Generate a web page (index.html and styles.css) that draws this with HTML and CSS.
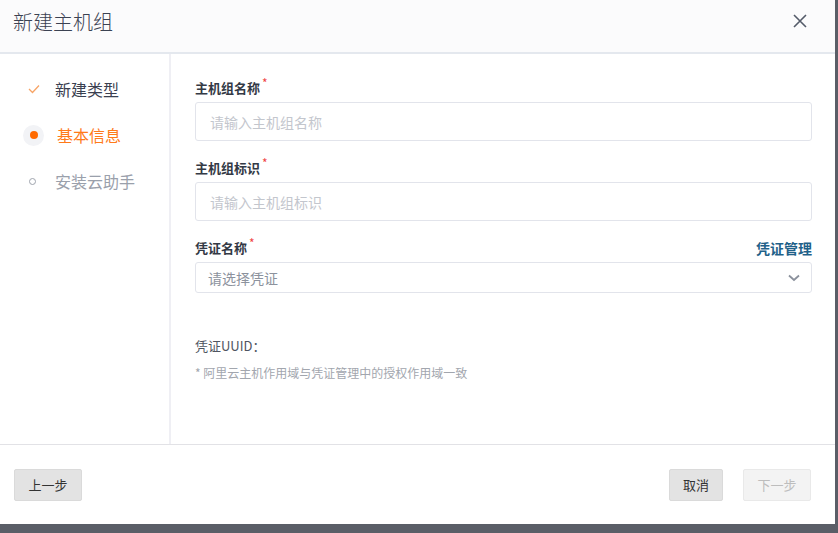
FILE: index.html
```html
<!DOCTYPE html>
<html lang="zh-CN">
<head>
  <meta charset="UTF-8" />
  <meta name="viewport" content="width=device-width, initial-scale=1.0"/>
  <title>新建主机组</title>
  <link rel="stylesheet" href="styles.css">
</head>
<body>

  <div class="dialog">
    <header class="dialog-header">
      <h1>新建主机组</h1>
      <button class="close-button" aria-label="关闭">
        <svg width="14" height="14" viewBox="0 0 14 14">
          <path d="M1 1 L13 13 M13 1 L1 13" stroke="#545b69" stroke-width="1.6" fill="none"/>
        </svg>
      </button>
    </header>

    <div class="dialog-body">
      <ul class="steps">
        <li class="step done">
          <span class="step-icon">
            <svg width="12" height="10" viewBox="0 0 12 10">
              <path d="M1 5 L4.5 8.5 L11 1.5" stroke="#f7a466" stroke-width="1.3" fill="none"/>
            </svg>
          </span>
          新建类型
        </li>
        <li class="step current">
          <span class="step-icon"><span class="dot"></span></span>
          基本信息
        </li>
        <li class="step todo">
          <span class="step-icon"><span class="ring"></span></span>
          安装云助手
        </li>
      </ul>

      <form class="form">
        <label class="field-label">主机组名称<span class="req">*</span></label>
        <input class="text-input" type="text" placeholder="请输入主机组名称" />

        <label class="field-label spaced">主机组标识<span class="req">*</span></label>
        <input class="text-input" type="text" placeholder="请输入主机组标识" />

        <div class="field-label label-row spaced">
          <span>凭证名称<span class="req">*</span></span>
          <a href="#" class="link">凭证管理</a>
        </div>
        <div class="select">
          <span>请选择凭证</span>
          <svg width="12" height="8" viewBox="0 0 12 8">
            <path d="M1 1.5 L6 6 L11 1.5" stroke="#8b919c" stroke-width="1.8" fill="none"/>
          </svg>
        </div>

        <p class="uuid">凭证UUID：</p>
        <p class="note">* 阿里云主机作用域与凭证管理中的授权作用域一致</p>
      </form>
    </div>

    <footer class="dialog-footer">
      <button class="btn btn-wide">上一步</button>
      <div class="footer-right">
        <button class="btn">取消</button>
        <button class="btn btn-wide" disabled>下一步</button>
      </div>
    </footer>
  </div>

</body>
</html>
```

FILE: styles.css
```css
body {
  margin: 0;
  background: #5a5e67;
  font-family: "Noto Sans CJK SC", "Noto Sans", sans-serif;
  height: 533px;
  overflow: hidden;
}

.dialog {
  width: 835px;
  height: 524px;
  background: white;
  display: flex;
  flex-direction: column;
}

.dialog-header {
  height: 52px;
  background: #fbfbfc;
  border-bottom: 2px solid #e4e8ee;
  display: flex;
  align-items: center;
  justify-content: space-between;
  padding: 0 28px 0 13px;
  flex-shrink: 0;
}

.dialog-header h1 {
  margin: 0 0 10px;
  font-size: 20px;
  font-weight: 300;
  color: #3b4252;
}

.close-button {
  background: none;
  border: none;
  padding: 0;
  margin-bottom: 10px;
  cursor: pointer;
  display: flex;
}

.dialog-body {
  flex: 1;
  display: flex;
  border-bottom: 1px solid #e2e2e6;
}

.steps {
  width: 146px;
  margin: 0;
  padding: 12px 0 0 23px;
  list-style: none;
  border-right: 2px solid #efeff4;
}

.step {
  height: 46px;
  display: flex;
  align-items: center;
  gap: 11px;
  font-size: 16px;
  color: #3a4050;
}

.step-icon {
  width: 21px;
  height: 21px;
  display: flex;
  align-items: center;
  justify-content: center;
  border-radius: 50%;
}

.step.current {
  color: #ff7a1a;
  gap: 13px;
}

.step.current .step-icon {
  background: #f2f3f6;
}

.dot {
  width: 8px;
  height: 8px;
  border-radius: 50%;
  background: #ff6a00;
}

.step.todo {
  color: #9aa0ab;
}

.ring {
  width: 5px;
  height: 5px;
  border: 1.5px solid #9ea3ad;
  border-radius: 50%;
  margin-left: -2px;
}

.form {
  flex: 1;
  padding: 24px 23px 0 24px;
  display: flex;
  flex-direction: column;
}

.field-label {
  font-size: 13px;
  font-weight: 700;
  line-height: 20px;
  height: 20px;
  color: #333945;
  margin-bottom: 4px;
}

.field-label.spaced {
  margin-top: 17px;
}

.req {
  position: relative;
  top: -5px;
  color: #f04545;
  font-size: 12px;
  margin-left: 2px;
  font-weight: 400;
}

.label-row {
  display: flex;
  justify-content: space-between;
}

.link {
  color: #1f6189;
  font-size: 14px;
  text-decoration: none;
}

.text-input {
  height: 39px;
  box-sizing: border-box;
  border: 1px solid #e2e4eb;
  border-radius: 3px;
  padding: 0 14px;
  font-family: inherit;
  font-size: 14px;
}

.text-input::placeholder {
  color: #c3c6cd;
}

.select {
  height: 31px;
  box-sizing: border-box;
  border: 1px solid #e2e4eb;
  border-radius: 3px;
  padding: 0 11px 0 12px;
  display: flex;
  align-items: center;
  justify-content: space-between;
  font-size: 14px;
  color: #8c929d;
}

.uuid {
  margin: 43px 0 0;
  font-size: 13px;
  line-height: 20px;
  color: #4f5561;
}

.note {
  margin: 8px 0 0;
  font-size: 12px;
  line-height: 17px;
  color: #a2a6ae;
}

.dialog-footer {
  height: 79px;
  display: flex;
  align-items: center;
  justify-content: space-between;
  padding: 0 24px 0 14px;
  flex-shrink: 0;
}

.footer-right {
  display: flex;
  gap: 20px;
}

.btn {
  height: 32px;
  width: 54px;
  padding: 0;
  background: #e3e3e3;
  border: 1px solid #dadada;
  border-radius: 2px;
  font-family: inherit;
  font-size: 13px;
  color: #333;
  cursor: pointer;
}

.btn-wide {
  width: 68px;
}

.btn[disabled] {
  background: #f3f3f3;
  border-color: #e9e9e9;
  color: #bdbdbd;
  cursor: default;
}
```
